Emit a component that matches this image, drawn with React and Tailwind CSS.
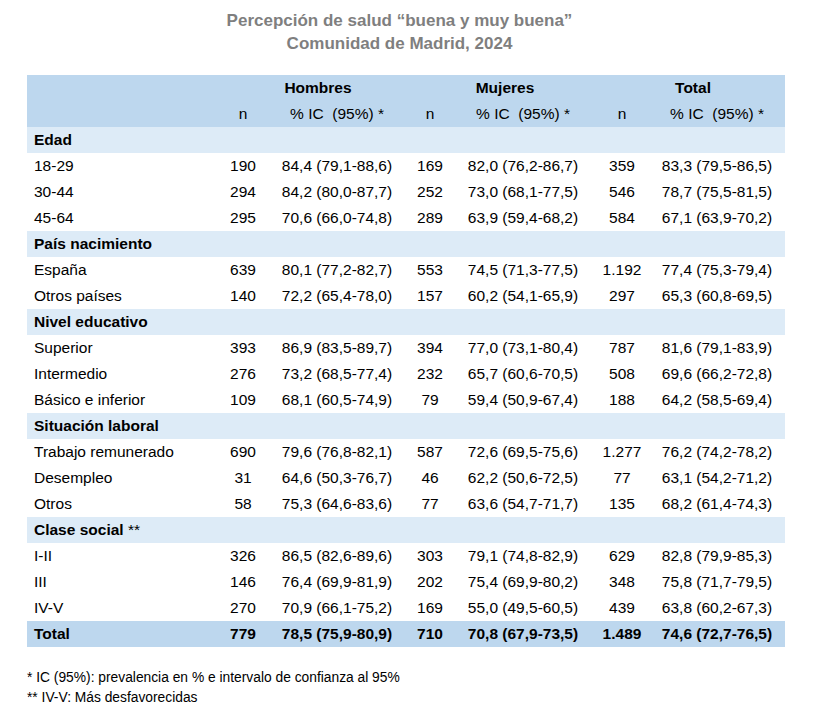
import React from "react";

const sections = [
  {
    title: "Edad",
    rows: [
      ["18-29", "190", "84,4 (79,1-88,6)", "169", "82,0 (76,2-86,7)", "359", "83,3 (79,5-86,5)"],
      ["30-44", "294", "84,2 (80,0-87,7)", "252", "73,0 (68,1-77,5)", "546", "78,7 (75,5-81,5)"],
      ["45-64", "295", "70,6 (66,0-74,8)", "289", "63,9 (59,4-68,2)", "584", "67,1 (63,9-70,2)"],
    ],
  },
  {
    title: "País nacimiento",
    rows: [
      ["España", "639", "80,1 (77,2-82,7)", "553", "74,5 (71,3-77,5)", "1.192", "77,4 (75,3-79,4)"],
      ["Otros países", "140", "72,2 (65,4-78,0)", "157", "60,2 (54,1-65,9)", "297", "65,3 (60,8-69,5)"],
    ],
  },
  {
    title: "Nivel educativo",
    rows: [
      ["Superior", "393", "86,9 (83,5-89,7)", "394", "77,0 (73,1-80,4)", "787", "81,6 (79,1-83,9)"],
      ["Intermedio", "276", "73,2 (68,5-77,4)", "232", "65,7 (60,6-70,5)", "508", "69,6 (66,2-72,8)"],
      ["Básico e inferior", "109", "68,1 (60,5-74,9)", "79", "59,4 (50,9-67,4)", "188", "64,2 (58,5-69,4)"],
    ],
  },
  {
    title: "Situación laboral",
    rows: [
      ["Trabajo remunerado", "690", "79,6 (76,8-82,1)", "587", "72,6 (69,5-75,6)", "1.277", "76,2 (74,2-78,2)"],
      ["Desempleo", "31", "64,6 (50,3-76,7)", "46", "62,2 (50,6-72,5)", "77", "63,1 (54,2-71,2)"],
      ["Otros", "58", "75,3 (64,6-83,6)", "77", "63,6 (54,7-71,7)", "135", "68,2 (61,4-74,3)"],
    ],
  },
  {
    title: "Clase social",
    extra: " **",
    rows: [
      ["I-II", "326", "86,5 (82,6-89,6)", "303", "79,1 (74,8-82,9)", "629", "82,8 (79,9-85,3)"],
      ["III", "146", "76,4 (69,9-81,9)", "202", "75,4 (69,9-80,2)", "348", "75,8 (71,7-79,5)"],
      ["IV-V", "270", "70,9 (66,1-75,2)", "169", "55,0 (49,5-60,5)", "439", "63,8 (60,2-67,3)"],
    ],
  },
];

const grid = "grid grid-cols-[188px_56px_132px_54px_132px_66px_124px] pr-[6px] h-[26px] items-center";

function DataRow({ r, bold, bg }) {
  return (
    <div className={`${grid} ${bg || ""} ${bold ? "font-bold" : ""}`}>
      <div className="pl-[7px] whitespace-nowrap">{r[0]}</div>
      {r.slice(1).map((c, i) => (
        <div key={i} className="text-center whitespace-nowrap">{c}</div>
      ))}
    </div>
  );
}

export default function App() {
  return (
    <div
      className="bg-white w-[835px] h-[713px] pl-[27px] pt-[9px] text-black"
      style={{ fontFamily: '"Liberation Sans", Arial, sans-serif' }}
    >
      <div className="w-[745px] text-center font-bold text-[#7f7f7f] text-[17px] leading-[23px]">
        <div>Percepción de salud “buena y muy buena”</div>
        <div>Comunidad de Madrid, 2024</div>
      </div>
      <div className="mt-[20px] w-[758px] text-[15.5px]">
        <div className="bg-[#bdd7ee]">
          <div className={`${grid} font-bold`}>
            <div></div>
            <div className="col-span-2 text-center pl-[18px]">Hombres</div>
            <div className="col-span-2 text-center pl-[18px]">Mujeres</div>
            <div className="col-span-2 text-center pl-[18px]">Total</div>
          </div>
          <div className={grid}>
            <div></div>
            <div className="text-center">n</div>
            <div className="text-center whitespace-pre">% IC  (95%) *</div>
            <div className="text-center">n</div>
            <div className="text-center whitespace-pre">% IC  (95%) *</div>
            <div className="text-center">n</div>
            <div className="text-center whitespace-pre">% IC  (95%) *</div>
          </div>
        </div>
        {sections.map((s) => (
          <div key={s.title}>
            <div className="h-[26px] flex items-center bg-[#ddebf7] pl-[7px] font-bold whitespace-pre">
              {s.title}
              {s.extra ? <span className="font-normal">{s.extra}</span> : null}
            </div>
            {s.rows.map((r) => (
              <DataRow key={r[0]} r={r} />
            ))}
          </div>
        ))}
        <DataRow
          r={["Total", "779", "78,5 (75,9-80,9)", "710", "70,8 (67,9-73,5)", "1.489", "74,6 (72,7-76,5)"]}
          bold
          bg="bg-[#bdd7ee]"
        />
      </div>
      <div className="mt-[21px] text-[13.8px] leading-[20px]">
        <div>* IC (95%): prevalencia en % e intervalo de confianza al 95%</div>
        <div>** IV-V: Más desfavorecidas</div>
      </div>
    </div>
  );
}
